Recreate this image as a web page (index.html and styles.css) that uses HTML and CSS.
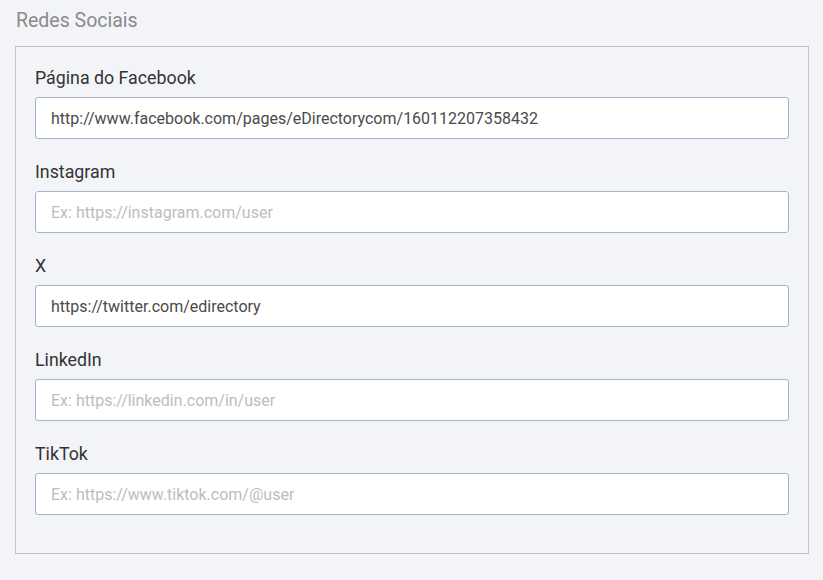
FILE: index.html
```html
<!DOCTYPE html>
<html lang="pt">
<head>
<meta charset="utf-8">
<link rel="stylesheet" href="styles.css">
</head>
<body>
<div class="page">
  <h2 class="title">Redes Sociais</h2>
  <div class="box">
    <div class="field">
      <label class="label">Página do Facebook</label>
      <input class="input" type="text" value="http://www.facebook.com/pages/eDirectorycom/160112207358432">
    </div>
    <div class="field">
      <label class="label">Instagram</label>
      <input class="input" type="text" placeholder="Ex: https://instagram.com/user">
    </div>
    <div class="field">
      <label class="label">X</label>
      <input class="input" type="text" value="https://twitter.com/edirectory">
    </div>
    <div class="field">
      <label class="label">LinkedIn</label>
      <input class="input" type="text" placeholder="Ex: https://linkedin.com/in/user">
    </div>
    <div class="field">
      <label class="label">TikTok</label>
      <input class="input" type="text" placeholder="Ex: https://www.tiktok.com/@user">
    </div>
  </div>
</div>
</body>
</html>
```
FILE: styles.css
```css
html, body {
  margin: 0;
  padding: 0;
  background: #f3f4f8;
  font-family: Roboto, "Liberation Sans", sans-serif;
}
.page {
  padding: 8px 15px 0 15px;
  width: 794px;
}
.title {
  margin: 0 0 0 1px;
  font-size: 19.5px;
  font-weight: 400;
  line-height: 26px;
  color: #8a8a8a;
  height: 38px;
}
.box {
  border: 1px solid #c4c4c4;
  padding: 19px 19px 38px 19px;
  display: flex;
  flex-direction: column;
  gap: 21px;
}
.field {
  display: flex;
  flex-direction: column;
  gap: 7px;
}
.label {
  font-size: 17.8px;
  line-height: 24px;
  color: #333;
}
.input {
  box-sizing: border-box;
  height: 42px;
  width: 100%;
  border: 1px solid #a3b6cb;
  border-radius: 3px;
  background: #fff;
  padding: 0 15px;
  font-family: Roboto, "Liberation Sans", sans-serif;
  font-size: 16px;
  color: #4a4a4a;
  outline: none;
  margin: 0;
}
.input::placeholder {
  color: #bdbdbd;
}
```
